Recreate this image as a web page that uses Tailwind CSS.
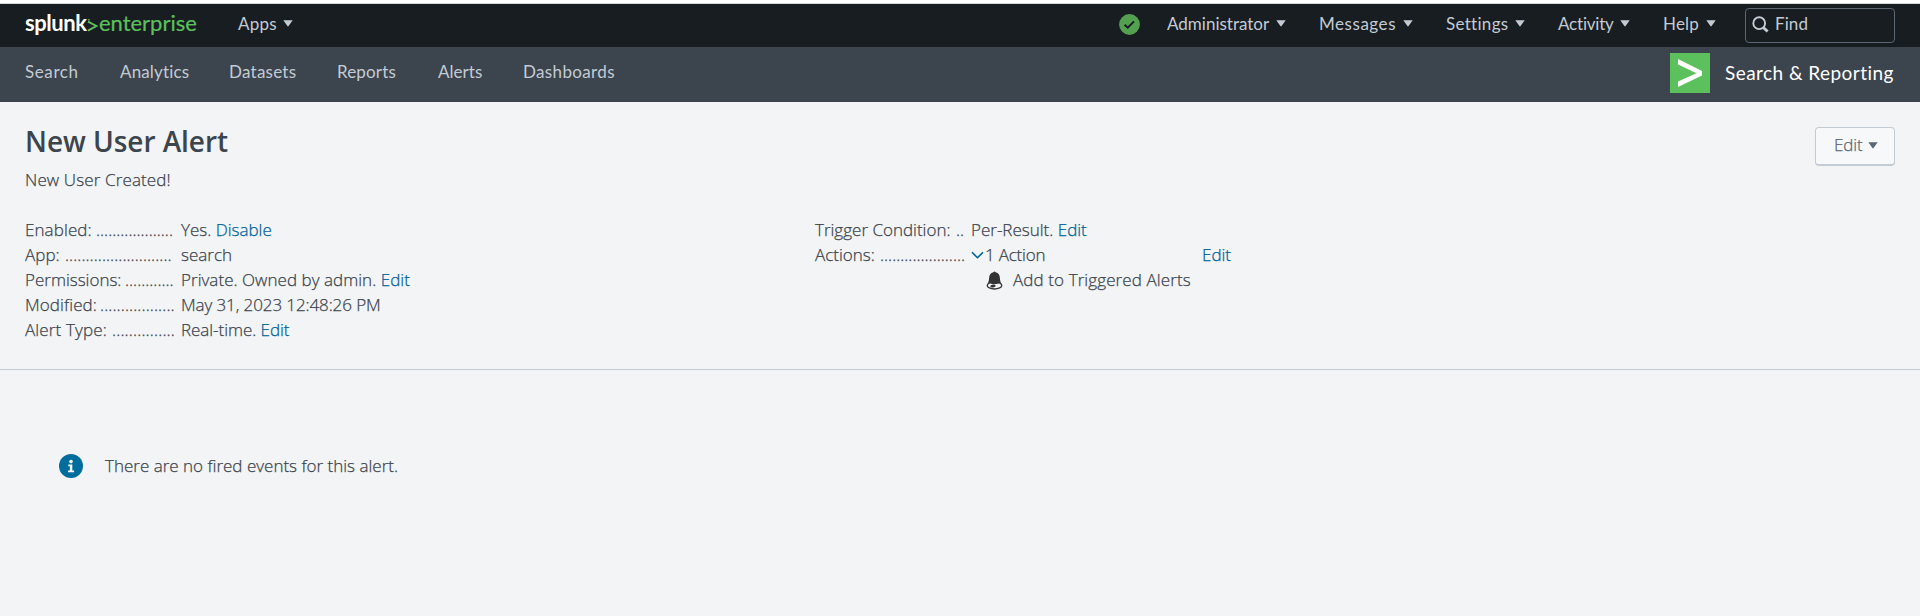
<!DOCTYPE html>
<html lang="en">
<head>
<meta charset="utf-8">
<title>New User Alert | Splunk</title>
<script src="https://cdn.jsdelivr.net/npm/@tailwindcss/browser@4"></script>
</head>
<body class="h-[616px] overflow-hidden bg-[#f2f4f5] font-['Open_Sans',sans-serif] text-[17px] leading-[25px] font-light text-[#3c444d]">
<svg class="hidden"><symbol id="caret" viewBox="0 0 10 7"><path d="M0.3 0.3h9.4L5.6 6.1q-.6.7-1.2 0z" fill="currentColor"/></symbol></svg>

<div class="h-[4px] border-b border-[#d4d6d8] bg-white"></div>

<header class="flex h-[43px] bg-[#171d21] px-[25px] font-['Lato',sans-serif] font-normal whitespace-nowrap text-[#c3cbd4]">
  <a class="flex w-[213px] pt-[4px] text-[22px] leading-[30px]">
    <span class="w-[62px] font-bold tracking-[-0.45px] text-white">splunk</span>
    <svg class="mt-[11px] mr-[1px] h-[14px] w-[11px]" viewBox="0 0 11 14" fill="none" stroke="#5cc05c" stroke-width="1.9"><path d="M1 2.6L9.400 7 1 11.600"/><path d="M1 0.800h1.800" stroke-width="1.200"/></svg>
    <span class="tracking-[-0.02px] text-[#5cc05c] [-webkit-text-stroke:0.2px]">enterprise</span>
  </a>
  <div class="flex w-[881px] pt-[7px]"><span class="w-[45px] tracking-[0.28px]">Apps</span><svg class="mt-[9px] h-[7px] w-[10px]"><use href="#caret"/></svg></div>
  <div class="w-[48px] pt-[10px]">
    <svg class="h-[21px] w-[21px]" viewBox="0 0 21 21"><circle cx="10.5" cy="10.5" r="10.4" fill="#53a051"/><path d="M5.6 10.8l3.200 2.900 6.200-6.300" fill="none" stroke="#171d21" stroke-width="2"/></svg>
  </div>
  <nav class="flex flex-1 pt-[7px]">
    <div class="flex w-[152px]"><span class="w-[109px]">Administrator</span><svg class="mt-[9px] h-[7px] w-[10px]"><use href="#caret"/></svg></div>
    <div class="flex w-[127px]"><span class="w-[84px] tracking-[0.54px]">Messages</span><svg class="mt-[9px] h-[7px] w-[10px]"><use href="#caret"/></svg></div>
    <div class="flex w-[112px]"><span class="w-[69px] tracking-[0.3px]">Settings</span><svg class="mt-[9px] h-[7px] w-[10px]"><use href="#caret"/></svg></div>
    <div class="flex w-[105px]"><span class="w-[62px] tracking-[-0.2px]">Activity</span><svg class="mt-[9px] h-[7px] w-[10px]"><use href="#caret"/></svg></div>
    <div class="flex"><span class="w-[43px] tracking-[0.19px]">Help</span><svg class="mt-[9px] h-[7px] w-[10px]"><use href="#caret"/></svg></div>
  </nav>
  <div class="mt-[4px] flex h-[35px] w-[150px] rounded-[4px] border border-[#5c6773] pt-[2px] pl-[6px]">
    <svg class="mt-[5px] mr-[5px] h-[18px] w-[18px]" viewBox="0 0 18 18" fill="none" stroke="#c3cbd4"><circle cx="7.200" cy="7.200" r="5.900" stroke-width="1.900"/><path d="M11.300 11.500l4.300 4" stroke-width="3"/></svg>
    <span class="tracking-[0.08px]">Find</span>
  </div>
</header>

<div class="flex h-[55px] justify-between bg-[#3c444d] px-[25px] font-['Lato',sans-serif] font-normal whitespace-nowrap text-[#c3cbd4]">
  <nav class="flex pt-[12px]">
    <a class="w-[95px] tracking-[0.6px]">Search</a>
    <a class="w-[109px] tracking-[0.15px]">Analytics</a>
    <a class="w-[108px] tracking-[0.25px]">Datasets</a>
    <a class="w-[101px] tracking-[0.15px]">Reports</a>
    <a class="w-[85px] tracking-[0.05px]">Alerts</a>
    <a class="tracking-[0.35px]">Dashboards</a>
  </nav>
  <div class="flex pt-[6px]">
    <svg class="h-10 w-10" viewBox="0 0 40 40"><path d="M0 0h40v40H0z" fill="#5cc05c"/><path d="M8 6l24 12v4.500L8 34v-5.500L26.500 20.200 8 11.500z" fill="#fff"/></svg>
    <span class="ml-[15px] w-[170px] pt-[7px] text-[19px] tracking-[0.45px] text-white">Search &amp; Reporting</span>
  </div>
</div>

<main class="[-webkit-text-stroke:0.25px]">
  <section class="h-[268px] border-b border-[#c3cbd4] px-[25px] pt-[21px]">
    <div class="flex h-[36px] justify-between">
      <h1 class="text-[28px] leading-[36px] font-semibold tracking-[-0.05px] [-webkit-text-stroke:0]">New User Alert</h1>
      <button class="mt-[4px] flex h-[39px] w-[80px] rounded-[4px] border border-b-2 border-[#c3cbd4] bg-[#f7f8fa] pt-[4px] pl-[18px] text-[#5c6773]"><span class="w-[34px] text-left tracking-[-0.1px]">Edit</span><svg class="mt-[10px] h-[7px] w-[10px]"><use href="#caret"/></svg></button>
    </div>
    <p class="mt-[8px] tracking-[0.13px]">New User Created!</p>
    <div class="mt-[25px] flex whitespace-nowrap">
      <dl class="grid w-[790px] grid-cols-[156px_1fr] content-start">
        <dt class="flex w-[151px] overflow-hidden"><span class="w-[71px] tracking-[0.1px]">Enabled:</span>...................</dt><dd>Yes. <a class="text-[#006297]">Disable</a></dd>
        <dt class="flex w-[151px] overflow-hidden tracking-[0.05px]"><span class="w-[40px]">App:</span>..........................</dt><dd>search</dd>
        <dt class="flex w-[151px] overflow-hidden"><span class="w-[100px]">Permissions:</span>............</dt><dd class="tracking-[0.04px]">Private. Owned by admin. <a class="text-[#006297]">Edit</a></dd>
        <dt class="flex w-[151px] overflow-hidden tracking-[0.1px]"><span class="w-[75px]">Modified:</span>..................</dt><dd class="tracking-[-0.1px]">May 31, 2023 12:48:26 PM</dd>
        <dt class="flex w-[151px] overflow-hidden tracking-[0.15px]"><span class="w-[87px]">Alert Type:</span>...............</dt><dd class="tracking-[-0.05px]">Real-time. <a class="text-[#006297]">Edit</a></dd>
      </dl>
      <dl class="grid w-[420px] grid-cols-[156px_1fr] content-start">
        <dt class="flex"><span class="w-[141px]">Trigger Condition:</span>..</dt><dd>Per-Result. <a class="text-[#006297]">Edit</a></dd>
        <dt class="flex"><span class="w-[65px]">Actions:</span>.....................</dt>
        <dd>
          <div class="flex"><svg class="mt-[9px] mr-[1px] h-[9px] w-[13px]" viewBox="0 0 13 9" fill="none" stroke="#006297" stroke-width="1.6"><path d="M1 1.300l5.500 5.400L12 1.300"/></svg><span class="w-[217px] tracking-[-0.2px]">1 Action</span><a class="text-[#006297]">Edit</a></div>
          <div class="flex pl-[15px]">
            <svg class="mt-[4px] mr-[10px] h-[19px] w-[17px]" viewBox="0 0 17 19"><ellipse cx="8.500" cy="14.400" rx="7.300" ry="3.600" fill="#f2f4f5" stroke="#333" stroke-width="1.300"/><path d="M7.300 1.200q1.200-1.400 2.400 0C12.500 2 13.800 4 13.900 7c.1 2.400.5 3.500 1 4.700C13 12.600 10.800 12.900 8.500 12.900S4 12.600 2.100 11.700c.5-1.200.9-2.300 1-4.700.1-3 1.400-5 4.200-5.800z" fill="#333"/><ellipse cx="7" cy="15" rx="2.700" ry="1.400" fill="#333" transform="rotate(-8 7 15)"/></svg>
            <span class="tracking-[0.1px]">Add to Triggered Alerts</span>
          </div>
        </dd>
      </dl>
    </div>
  </section>
  <section class="flex pt-[83px] pl-[59px]">
    <svg class="mt-px h-6 w-6" viewBox="0 0 24 24"><circle cx="12" cy="12" r="12" fill="#006d9c"/><circle cx="12" cy="7.600" r="1.800" fill="#fff"/><path d="M9.300 10.500h4v5.900h1.800v1.800H9v-1.800h1.900v-4.100H9.300z" fill="#fff"/></svg>
    <p class="ml-[22px]">There are no fired events for this alert.</p>
  </section>
</main>
</body>
</html>
